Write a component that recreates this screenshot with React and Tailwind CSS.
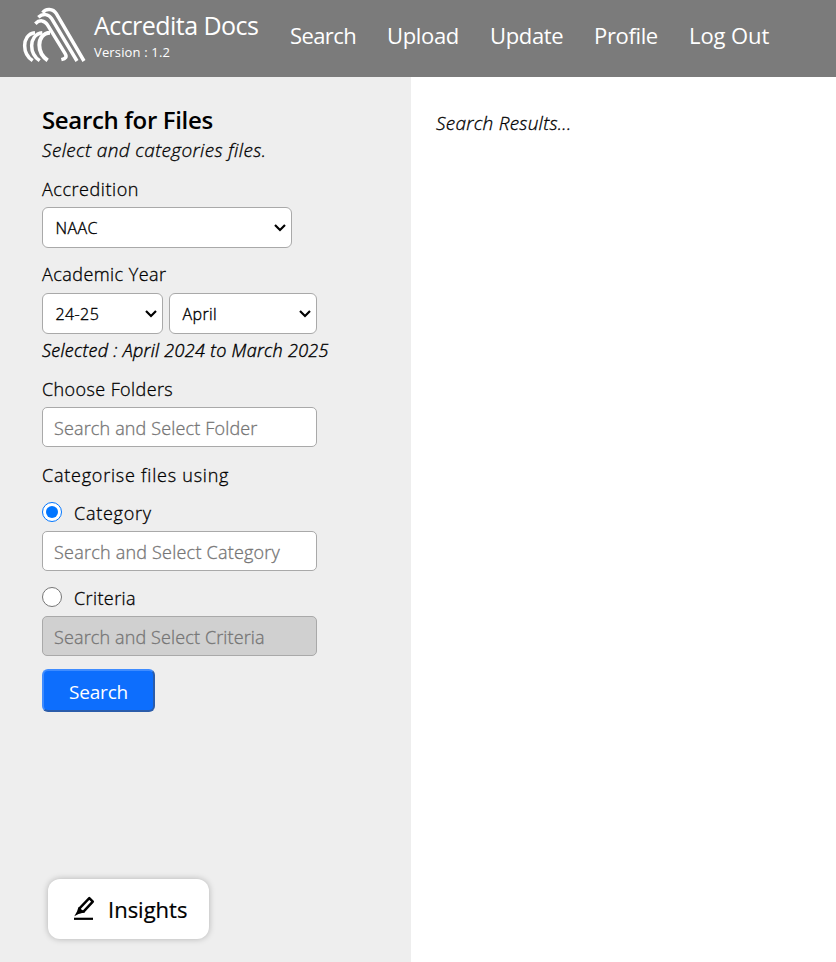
import React from "react";

const Logo = () => (
  <svg className="block h-[70px] w-[80px] shrink-0" viewBox="0 0 240 210" fill="none" stroke="#fff" strokeWidth="10.5">
    <path d="M83 38C92 25 114 25 124 41L207 183" />
    <path d="M70 52C84 39 101 42 110 56L186 183" />
    <path d="M61 71C74 58 89 61 97 74L150 160C157 171 152 176 139 179" />
    <path d="M60 98C38 100 29 119 29 137C29 157 37 171 53 182" />
    <path d="M82 98C60 100 50 119 50 137C50 157 58 171 74 182" />
    <path strokeWidth="12" d="M105 98C84 98 73 117 73 135C73 155 82 170 98 181" />
  </svg>
);

const Chevron = () => (
  <svg className="h-[8px] w-[12px] shrink-0" viewBox="0 0 12 8" fill="none" stroke="#000" strokeWidth="2.2">
    <path d="M1 1L6 6L11 1" />
  </svg>
);

const Select = ({ className, children }) => (
  <div className={`flex h-[41px] items-center justify-between rounded-[6px] border border-[#a9a9a9] bg-white pl-[12.5px] pr-[5px] text-[16px] font-light [-webkit-text-stroke:0.35px_currentColor] ${className}`}>
    <span className="tracking-[0.4px]">{children}</span>
    <Chevron />
  </div>
);

const Field = ({ className = "bg-white tracking-[0.15px]", placeholder, disabled }) => (
  <input
    className={`block h-[40px] w-[275px] rounded-[5px] border border-[#a9a9a9] px-[11px] pt-[2px] text-[18px] font-light [-webkit-text-stroke:0.3px_#757575] placeholder:text-[#757575] ${className}`}
    placeholder={placeholder}
    disabled={disabled}
  />
);

const Label = ({ className = "", children }) => (
  <div className={`h-[24px] whitespace-nowrap text-[18px] font-light leading-[24px] [-webkit-text-stroke:0.3px_currentColor] ${className}`}>{children}</div>
);

export default function App() {
  return (
    <div className="flex h-[962px] w-[836px] flex-col overflow-hidden bg-white font-['Open_Sans','Noto_Sans',sans-serif] text-black">
      <header className="flex h-[77px] shrink-0 bg-[#7b7b7b] pl-[15px] text-white">
        <Logo />
        <div className="w-[195px] shrink-0 whitespace-nowrap pt-[9px]">
          <div className="-ml-px h-[34px] text-[25px] leading-[33px] tracking-[-0.55px]">Accredita Docs</div>
          <div className="-ml-px text-[13px] leading-[18px] tracking-[0.15px]">Version : 1.2</div>
        </div>
        <nav className="flex whitespace-nowrap pt-[19px] text-[22px] leading-[32px] tracking-[-0.35px]">
          <a className="w-[97px] tracking-[-0.6px]">Search</a>
          <a className="w-[103px]">Upload</a>
          <a className="w-[104px]">Update</a>
          <a className="w-[95px]">Profile</a>
          <a className="tracking-[-0.1px]">Log Out</a>
        </nav>
      </header>
      <main className="flex min-h-0 flex-1">
        <aside className="flex w-[411px] shrink-0 flex-col bg-[#eeeeee] pl-[42px] pt-[27px]">
          <h1 className="h-[32px] text-[24px] font-semibold leading-[32px] tracking-[-0.35px]">Search for Files</h1>
          <div className="h-[28px] text-[19px] font-light italic leading-[28px] tracking-[0.37px] [-webkit-text-stroke:0.3px_currentColor]">Select and categories files.</div>
          <Label className="mt-[13px] tracking-[0.55px]">Accredition</Label>
          <Select className="mt-[6px] w-[250px]">NAAC</Select>
          <Label className="mt-[14px] tracking-[0.45px]">Academic Year</Label>
          <div className="mt-[7px] flex gap-[6px]">
            <Select className="w-[121px]">24-25</Select>
            <Select className="w-[148px]">April</Select>
          </div>
          <div className="mt-[3px] h-[27px] whitespace-nowrap text-[18px] font-light italic leading-[26px] tracking-[0.3px] [-webkit-text-stroke:0.4px_currentColor]">Selected : April 2024 to March 2025</div>
          <Label className="mt-[13px] tracking-[0.4px]">Choose Folders</Label>
          <div className="mt-[6px]"><Field placeholder="Search and Select Folder" /></div>
          <Label className="mt-[16px] tracking-[0.78px]">Categorise files using</Label>
          <div className="mt-[14px] flex h-[24px] items-center">
            <span className="mb-[2px] flex size-[20px] items-center justify-center rounded-full border-[1.5px] border-[#0075ff] bg-white">
              <span className="size-[12px] rounded-full bg-[#0075ff]" />
            </span>
            <Label className="ml-[12px] tracking-[0.75px]">Category</Label>
          </div>
          <div className="mt-[6px]"><Field className="bg-white tracking-[0.22px]" placeholder="Search and Select Category" /></div>
          <div className="mt-[15px] flex h-[24px] items-center">
            <span className="mb-[2px] size-[20px] rounded-full border-[1.5px] border-[#767676] bg-white" />
            <Label className="ml-[12px] tracking-[0.4px]">Criteria</Label>
          </div>
          <div className="mt-[6px]"><Field className="bg-[#d0d0d0] tracking-[0.13px]" placeholder="Search and Select Criteria" disabled /></div>
          <button className="mt-[13px] h-[43px] w-[113px] rounded-[6px] border-2 border-b-[#2a5caa] border-l-[#3f8cff] border-r-[#2a5caa] border-t-[#3f8cff] bg-[#0d6efd] pt-[4px] text-[19px] tracking-[-0.2px] text-white">Search</button>
          <button className="ml-[6px] mt-[167px] flex h-[60px] w-[161px] shrink-0 items-center rounded-[12px] bg-white pl-[24px] shadow-[0_0_6px_rgba(0,0,0,0.25)]">
            <svg className="size-[26px] shrink-0" viewBox="0 0 26 26" fill="none" stroke="#000">
              <path d="M2 22.8H21" strokeWidth="2.2" />
              <path d="M17.3 2.2L20.8 5.7L12 15.2L7 16.4L8 11.8Z" strokeWidth="2.5" strokeLinejoin="round" />
              <path d="M6.5 11L13 16.5L7.5 17.5L2.3 20.2L5 15.5Z" fill="#000" stroke="none" />
            </svg>
            <span className="ml-[10px] text-[22px] font-normal [-webkit-text-stroke:0.2px_currentColor]">Insights</span>
          </button>
        </aside>
        <section className="flex-1 pl-[25px] pt-[32px]">
          <div className="text-[19px] font-light italic leading-[28px] tracking-[0.25px] [-webkit-text-stroke:0.3px_currentColor]">Search Results...</div>
        </section>
      </main>
    </div>
  );
}
